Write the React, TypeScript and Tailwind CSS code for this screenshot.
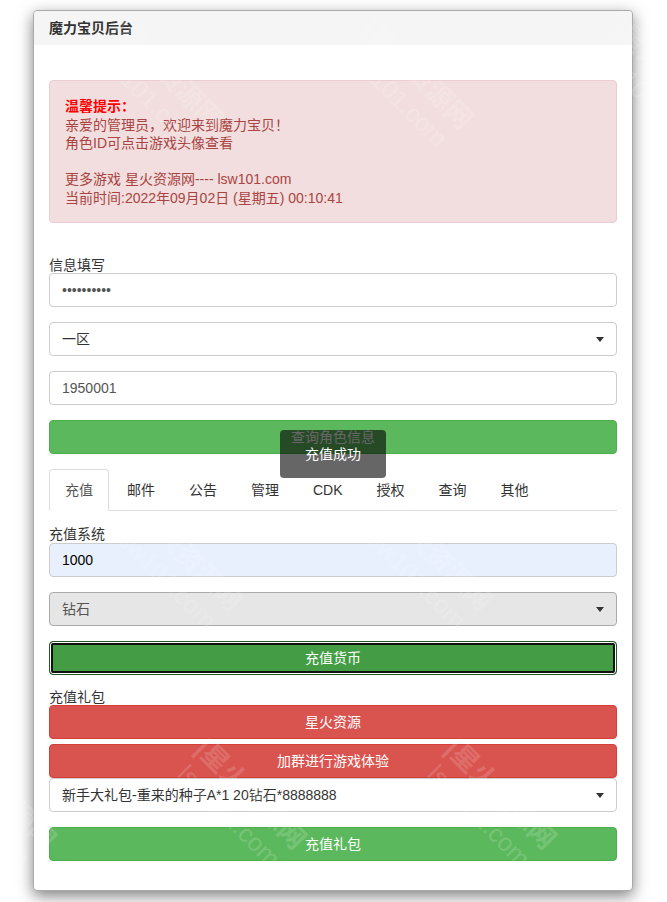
// centre of each watermark block, in page pixels
const WATERMARKS = [
  [157, 85], [407, 85], [657, 85],
  [176, 567], [426, 567],
  [-10, 805], [240, 805], [490, 805],
];

function Caret() {
  return <span className="absolute right-3 top-1/2 -mt-[2px] h-0 w-0 border-x-[4px] border-t-[5px] border-x-transparent border-t-[#333]" />;
}

function Field({ children, tone = "border-[#ccc] text-[#555]" }: { children: React.ReactNode; tone?: string }) {
  return (
    <div className={`relative mb-[15px] flex h-[34px] items-center rounded border px-3 text-sm ${tone}`}>
      {children}
    </div>
  );
}

function Btn({ label, color, mb = "mb-[15px]" }: { label: string; color: "green" | "red"; mb?: string }) {
  const cls = color === "green" ? "bg-[#5cb85c] border-[#4cae4c]" : "bg-[#d9534f] border-[#d43f3a]";
  return (
    <button type="button" className={`flex h-[34px] w-full items-center justify-center rounded border text-sm text-white ${cls} ${mb}`}>
      {label}
    </button>
  );
}

const TABS = ["充值", "邮件", "公告", "管理", "CDK", "授权", "查询", "其他"];

export default function App() {
  return (
    <div className="relative h-[902px] overflow-hidden bg-white font-['Liberation_Sans','Noto_Sans_CJK_SC',sans-serif] text-sm leading-[20px] text-[#333]">
      <div className="ml-[33px] mr-[34px] mt-[10px] h-[881px] rounded border border-[#aaa] bg-white shadow-[0_5px_15px_rgba(0,0,0,0.5)]">
        <div className="flex h-[34px] items-center rounded-t bg-[#f5f5f5] px-[15px] font-bold">魔力宝贝后台</div>
        <div className="px-[15px] pt-[35px]">
          <div className="mb-[32px] h-[143px] rounded border border-[#ebccd1] bg-[#f2dede] px-[15px] pt-[16px] leading-[18.5px] text-[#a94442]">
            <div className="font-bold text-[#f00]">温馨提示：</div>
            <div>亲爱的管理员，欢迎来到魔力宝贝！</div>
            <div>角色ID可点击游戏头像查看</div>
            <div className="mt-[17.5px]">更多游戏 星火资源网---- lsw101.com</div>
            <div>当前时间:2022年09月02日 (星期五) 00:10:41</div>
          </div>
          <div className="-mb-[2px] h-[20px]">信息填写</div>
          <Field>••••••••••</Field>
          <Field tone="border-[#ccc] text-[#333]">一区<Caret /></Field>
          <Field>1950001</Field>
          <Btn label="查询角色信息" color="green" />
          <div className="flex h-[42px] border-b border-[#ddd]">
            {TABS.map((t, i) => (
              <div
                key={t}
                className={`mr-[2px] flex h-[42px] items-center rounded-t border px-[15px] ${i === 0 ? "border-[#ddd] border-b-white bg-white text-[#555]" : "border-transparent"}`}
              >
                {t}
              </div>
            ))}
          </div>
          <div className="mt-[13px] -mb-[1px] h-[20px]">充值系统</div>
          <Field tone="border-[#ccc] bg-[#e8f0fe] text-black">1000</Field>
          <Field tone="border-[#aaa] bg-[#e6e6e6] text-[#555]">钻石<Caret /></Field>
          <div className="mb-[12px] flex h-[34px] items-center justify-center rounded border border-[#255625] bg-[#449d44] text-white shadow-[inset_0_0_0_1px_#fff,inset_0_0_0_3px_#111]">充值货币</div>
          <div className="-mb-[2px] h-[20px]">充值礼包</div>
          <Btn label="星火资源" color="red" mb="mb-[5px]" />
          <Btn label="加群进行游戏体验" color="red" mb="mb-0" />
          <Field tone="border-[#ccc] text-[#333]">新手大礼包-重来的种子A*1 20钻石*8888888<Caret /></Field>
          <Btn label="充值礼包" color="green" />
        </div>
      </div>

      {/* toast over the query button */}
      <div className="absolute left-[280px] top-[430px] flex h-[48px] w-[106px] items-center justify-center rounded-sm bg-black/60 text-white">
        充值成功
      </div>

      {/* watermark */}
      <div className="pointer-events-none absolute inset-0">
        {WATERMARKS.map(([x, y]) => (
          <div
            key={`${x}-${y}`}
            className="absolute w-[190px] -translate-x-1/2 -translate-y-1/2 rotate-45 text-center text-[27px] leading-[30px] font-bold whitespace-nowrap text-white/[0.18]"
            style={{ left: x, top: y }}
          >
            |星火资源网
            <div className="text-[25px] font-normal">lsw101.com</div>
          </div>
        ))}
      </div>
    </div>
  );
}
